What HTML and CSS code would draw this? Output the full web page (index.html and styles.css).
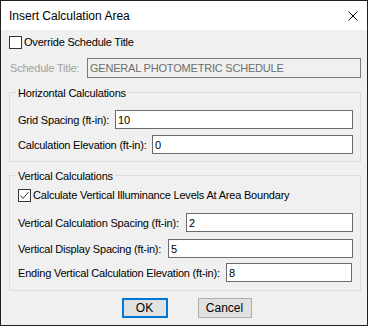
FILE: index.html
```html
<!DOCTYPE html>
<html lang="en">
<head>
  <meta charset="UTF-8" />
  <title>Insert Calculation Area</title>
  <link rel="stylesheet" href="styles.css">
</head>
<body>
  <div class="window">
    <div class="titlebar">
      <span class="title">Insert Calculation Area</span>
      <svg class="close" width="10" height="10" viewBox="0 0 10 10">
        <path d="M0.5 0.5L9.5 9.5M9.5 0.5L0.5 9.5" stroke="#000" stroke-width="1" fill="none"/>
      </svg>
    </div>
    <div class="content">
      <label class="check">
        <span class="box"></span>
        <span>Override Schedule Title</span>
      </label>
      <div class="row sched-row">
        <span class="label disabled">Schedule Title:</span>
        <input class="field" value="GENERAL PHOTOMETRIC SCHEDULE" disabled>
      </div>

      <div class="group horiz">
        <div class="legend">Horizontal Calculations</div>
        <div class="row r-grid">
          <span class="label">Grid Spacing (ft-in):</span>
          <input class="field" value="10">
        </div>
        <div class="row r-elev">
          <span class="label">Calculation Elevation (ft-in):</span>
          <input class="field" value="0">
        </div>
      </div>

      <div class="group vert">
        <div class="legend">Vertical Calculations</div>
        <label class="check v-check">
          <span class="box">
            <svg width="11" height="11" viewBox="0 0 11 11">
              <path d="M1.5 5.5L4 8.5L9.5 2" stroke="#333" stroke-width="1" fill="none"/>
            </svg>
          </span>
          <span>Calculate Vertical Illuminance Levels At Area Boundary</span>
        </label>
        <div class="row r-vspace">
          <span class="label">Vertical Calculation Spacing (ft-in):</span>
          <input class="field" value="2">
        </div>
        <div class="row r-vdisp">
          <span class="label">Vertical Display Spacing (ft-in):</span>
          <input class="field" value="5">
        </div>
        <div class="row r-end">
          <span class="label">Ending Vertical Calculation Elevation (ft-in):</span>
          <input class="field end-field" value="8">
        </div>
      </div>

      <div class="buttons">
        <button class="btn btn-ok">OK</button>
        <button class="btn btn-cancel">Cancel</button>
      </div>
    </div>
  </div>
</body>
</html>
```

FILE: styles.css
```css
:root {
  --face: #f0f0f0;
  --edge: #6b6b6b;
  --group: #dcdcdc;
}
html, body {
  margin: 0; padding: 0;
  font-family: "Liberation Sans", Arial, sans-serif;
  font-size: 11px; color: #000;
  letter-spacing: -0.2px;
}
.window {
  width: 368px; height: 326px; box-sizing: border-box;
  border: 1px solid #1f1f1f;
  background: var(--face);
  display: flex; flex-direction: column;
}
.titlebar {
  height: 29px; flex: none; background: #fff;
  display: flex; align-items: center; justify-content: space-between;
  padding: 0 9px 0 8px;
}
.title { font-size: 12px; letter-spacing: 0; }
.close { margin-top: 1px; }
.content {
  padding: 6px 6px 0 8px;
  display: flex; flex-direction: column;
}
.check {
  display: flex; align-items: center; gap: 2px;
  height: 13px; line-height: 13px;
  align-self: flex-start;
}
.box {
  width: 13px; height: 13px; box-sizing: border-box; flex: none;
  border: 1px solid #333; background: #fff;
  display: flex;
}
.row { display: flex; align-items: center; }
.label { flex: none; white-space: nowrap; }
.disabled { color: #a0a0a0; }
.field {
  flex: 1; min-width: 0; margin: 0;
  height: 19px; box-sizing: border-box;
  border: 1px solid var(--edge); border-radius: 0;
  padding: 0 2px; outline: none;
  font: inherit; letter-spacing: inherit; color: #000; background: #fff;
}
.field:disabled {
  background: var(--face); color: #6d6d6d;
  border-color: #7a7a7a;
}
.end-field { margin-right: 1px; }

.sched-row { margin-top: 9px; }
.sched-row .label { width: 77px; padding-left: 1px; }
.sched-row .field { height: 20px; }

.group {
  border: 1px solid var(--group);
  display: flex; flex-direction: column;
}
.legend {
  align-self: flex-start;
  margin: -7px 0 0 -2px; padding: 0 2px;
  line-height: 14px; background: var(--face);
}
.horiz { margin-top: 14px; padding: 0 7px 7px 8px; }
.vert { margin-top: 13px; padding: 0 7px 8px 8px; }

.r-grid { margin-top: 10px; }
.r-grid .label { width: 97px; }
.r-elev { margin-top: 6px; }
.r-elev .label { width: 134px; }
.v-check { margin-top: 6px; }
.r-vspace { margin-top: 11px; }
.r-vspace .label { width: 168px; }
.r-vdisp { margin-top: 7px; }
.r-vdisp .label { width: 150px; }
.r-end { margin-top: 5px; }
.r-end .label { width: 208px; }

.buttons {
  display: flex; justify-content: center; gap: 30px;
  margin-top: 7px; padding-left: 3px;
}
.btn {
  height: 20px; box-sizing: border-box; margin: 0; padding: 0;
  background: #e1e1e1; border: 1px solid #adadad; border-radius: 0;
  font: inherit; font-size: 12px; letter-spacing: 0; color: #000;
}
.btn-ok { width: 46px; border: 2px solid #0078d7; }
.btn-cancel { width: 54px; }
```
